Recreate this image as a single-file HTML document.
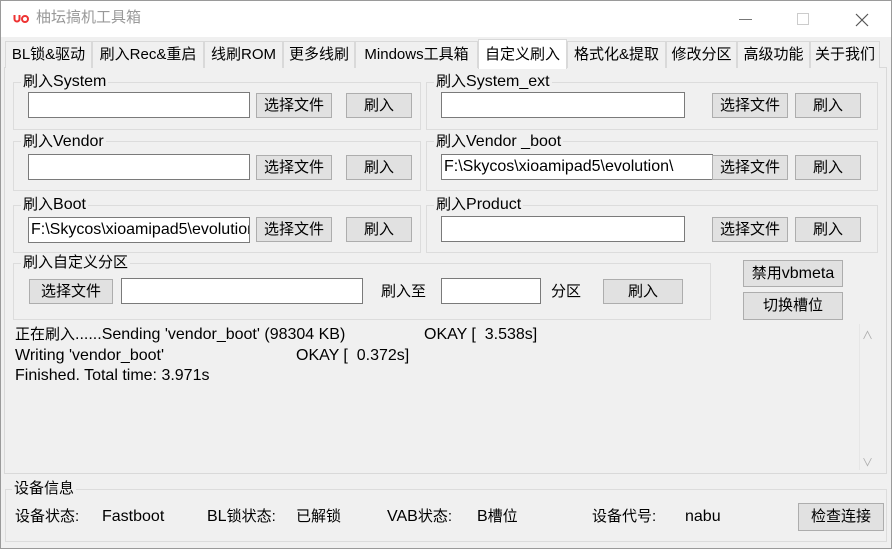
<!DOCTYPE html>
<html><head><meta charset="utf-8"><style>
*{box-sizing:border-box;margin:0;padding:0}
body{width:892px;height:549px;overflow:hidden;background:#f0f0f0;font-family:"Liberation Sans","Noto Sans CJK SC",sans-serif;font-size:15px;color:#000;position:relative}
.a{position:absolute;white-space:nowrap;line-height:20px}
.L{font-size:16px}
.win{position:absolute;left:0;top:0;width:892px;height:549px;border:1px solid #9a9a9a}
.title{position:absolute;left:1px;top:1px;width:890px;height:36px;background:#fff}
.tab{position:absolute;top:41px;height:27px;border:1px solid #d9d9d9;border-bottom:none;background:#f0f0f0;text-align:center;line-height:26px}
.tab.sel{top:39px;height:30px;background:#fff;z-index:2;line-height:30px}
.grp{position:absolute;border:1px solid #dcdcdc}
.gt{position:absolute;background:#f0f0f0;padding:0 2px;line-height:18px}
.in{position:absolute;background:#fff;border:1px solid #7a7a7a;height:26px;line-height:24px;padding-left:2px;overflow:hidden;white-space:nowrap;font-size:16px}
.bt{position:absolute;background:#e1e1e1;border:1px solid #adadad;height:25px;text-align:center;line-height:23px}
</style></head><body>
<div class="win"></div>
<div class="title">
 <svg class="a" style="left:12px;top:13px" width="16" height="10"><path d="M1.5 1v4a2.5 2.5 0 0 0 5 0V1" stroke="#e33" stroke-width="2" fill="none"/><circle cx="12" cy="5" r="3" stroke="#e33" stroke-width="2" fill="none"/></svg>
 <div class="a" style="left:35px;top:7px;color:#999;font-size:15px">柚坛搞机工具箱</div>
 <div class="a" style="left:738px;top:18px;width:13px;height:1px;background:#777"></div>
 <div class="a" style="left:796px;top:12px;width:12px;height:12px;border:1px solid #ccc"></div>
 <svg class="a" style="left:854px;top:12px" width="14" height="14"><path d="M1 1L13 13M13 1L1 13" stroke="#555" stroke-width="1.2"/></svg>
</div>
<div class="a" style="left:4px;top:67px;width:883px;height:407px;border:1px solid #d9d9d9;background:#f0f0f0"></div>
<div class="tab" style="left:5px;width:87px">BL锁&amp;驱动</div>
<div class="tab" style="left:92px;width:112px">刷入Rec&amp;重启</div>
<div class="tab" style="left:204px;width:79px">线刷ROM</div>
<div class="tab" style="left:283px;width:72px">更多线刷</div>
<div class="tab" style="left:355px;width:123px">Mindows工具箱</div>
<div class="tab sel" style="left:478px;width:89px">自定义刷入</div>
<div class="tab" style="left:567px;width:99px">格式化&amp;提取</div>
<div class="tab" style="left:666px;width:71px">修改分区</div>
<div class="tab" style="left:737px;width:73px">高级功能</div>
<div class="tab" style="left:810px;width:70px">关于我们</div>

<div class="grp" style="left:13px;top:82px;width:408px;height:48px"></div><div class="gt a" style="left:21px;top:73px">刷入<span class="L">System</span></div>
<div class="in" style="left:28px;top:92px;width:222px"></div>
<div class="bt" style="left:256px;top:93px;width:76px">选择文件</div>
<div class="bt" style="left:346px;top:93px;width:66px">刷入</div>
<div class="grp" style="left:426px;top:82px;width:452px;height:48px"></div><div class="gt a" style="left:434px;top:73px">刷入<span class="L">System_ext</span></div>
<div class="in" style="left:441px;top:92px;width:244px"></div>
<div class="bt" style="left:712px;top:93px;width:76px">选择文件</div>
<div class="bt" style="left:795px;top:93px;width:66px">刷入</div>

<div class="grp" style="left:13px;top:141px;width:408px;height:50px"></div><div class="gt a" style="left:21px;top:133px">刷入<span class="L">Vendor</span></div>
<div class="in" style="left:28px;top:154px;width:222px"></div>
<div class="bt" style="left:256px;top:155px;width:76px">选择文件</div>
<div class="bt" style="left:346px;top:155px;width:66px">刷入</div>
<div class="grp" style="left:426px;top:141px;width:452px;height:50px"></div><div class="gt a" style="left:434px;top:133px">刷入<span class="L">Vendor _boot</span></div>
<div class="in" style="left:441px;top:154px;width:272px">F:\Skycos\xioamipad5\evolution\</div>
<div class="bt" style="left:712px;top:155px;width:76px">选择文件</div>
<div class="bt" style="left:795px;top:155px;width:66px">刷入</div>

<div class="grp" style="left:13px;top:205px;width:408px;height:48px"></div><div class="gt a" style="left:21px;top:196px">刷入<span class="L">Boot</span></div>
<div class="in" style="left:28px;top:217px;width:222px">F:\Skycos\xioamipad5\evolution</div>
<div class="bt" style="left:256px;top:217px;width:76px">选择文件</div>
<div class="bt" style="left:346px;top:217px;width:66px">刷入</div>
<div class="grp" style="left:426px;top:205px;width:452px;height:48px"></div><div class="gt a" style="left:434px;top:196px">刷入<span class="L">Product</span></div>
<div class="in" style="left:441px;top:216px;width:244px"></div>
<div class="bt" style="left:712px;top:217px;width:76px">选择文件</div>
<div class="bt" style="left:795px;top:217px;width:66px">刷入</div>

<div class="grp" style="left:13px;top:263px;width:698px;height:57px"></div><div class="gt a" style="left:21px;top:254px">刷入自定义分区</div>
<div class="bt" style="left:29px;top:279px;width:84px">选择文件</div>
<div class="in" style="left:121px;top:278px;width:242px"></div>
<div class="a" style="left:381px;top:282px">刷入至</div>
<div class="in" style="left:441px;top:278px;width:100px"></div>
<div class="a" style="left:551px;top:282px">分区</div>
<div class="bt" style="left:603px;top:279px;width:80px">刷入</div>
<div class="bt" style="left:743px;top:260px;width:100px;height:27px;line-height:25px">禁用<span class="L">vbmeta</span></div>
<div class="bt" style="left:743px;top:292px;width:100px;height:28px;line-height:26px">切换槽位</div>

<div class="a" style="left:859px;top:324px;width:18px;height:146px;border-left:1px solid #e6e6e6"></div>
<div class="a" style="left:862px;top:326px;color:#aaa;font-size:11px">&#8743;</div>
<div class="a" style="left:862px;top:453px;color:#aaa;font-size:11px">&#8744;</div>
<div class="a" style="left:15px;top:325px">正在刷入<span class="L">......Sending 'vendor_boot' (98304 KB)</span></div>
<div class="a L" style="left:424px;top:325px">OKAY [&nbsp; 3.538s]</div>
<div class="a L" style="left:15px;top:346px">Writing 'vendor_boot'</div>
<div class="a L" style="left:296px;top:346px">OKAY [&nbsp; 0.372s]</div>
<div class="a L" style="left:15px;top:366px">Finished. Total time: 3.971s</div>

<div class="grp" style="left:5px;top:489px;width:882px;height:53px"></div><div class="gt a" style="left:12px;top:480px">设备信息</div>
<div class="a" style="left:15px;top:507px">设备状态:</div>
<div class="a L" style="left:102px;top:507px">Fastboot</div>
<div class="a" style="left:207px;top:507px"><span class="L">BL</span>锁状态:</div>
<div class="a" style="left:296px;top:507px">已解锁</div>
<div class="a" style="left:387px;top:507px"><span class="L">VAB</span>状态:</div>
<div class="a" style="left:477px;top:507px"><span class="L">B</span>槽位</div>
<div class="a" style="left:592px;top:507px">设备代号:</div>
<div class="a L" style="left:685px;top:507px">nabu</div>
<div class="bt" style="left:798px;top:503px;width:86px;height:28px;line-height:26px">检查连接</div>
</body></html>
